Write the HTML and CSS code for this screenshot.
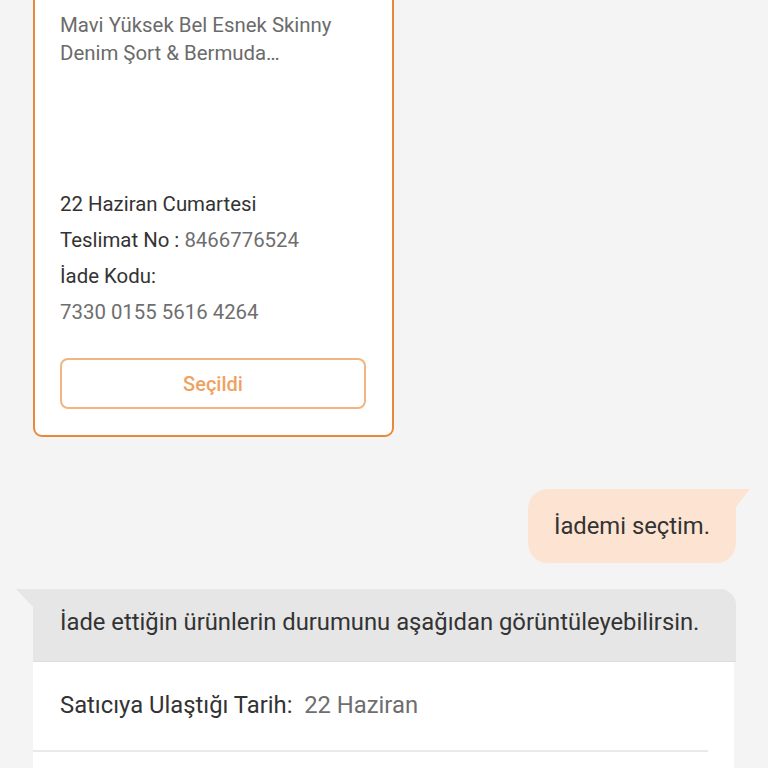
FILE: index.html
```html
<!DOCTYPE html>
<html lang="tr">
<head>
    <meta charset="UTF-8">
    <meta name="viewport" content="width=device-width, initial-scale=1.0">
    <title>İade Asistanı</title>
    <link rel="stylesheet" href="styles.css">
</head>
<body>
    <div class="chat">
        <div class="order-card">
            <div class="product-name">Mavi Yüksek Bel Esnek Skinny Denim Şort &amp; Bermuda…</div>
            <div class="order-info">
                <div class="info-line">22 Haziran Cumartesi</div>
                <div class="info-line">Teslimat No : <span class="muted">8466776524</span></div>
                <div class="info-line">İade Kodu:</div>
                <div class="info-line muted">7330 0155 5616 4264</div>
            </div>
            <button class="select-btn">Seçildi</button>
        </div>

        <div class="msg-row right">
            <div class="bubble user">İademi seçtim.</div>
        </div>

        <div class="bot-box">
            <div class="bot-head">İade ettiğin ürünlerin durumunu aşağıdan görüntüleyebilirsin.</div>
            <div class="bot-body">
                <div class="status-row">Satıcıya Ulaştığı Tarih:&nbsp; <span class="muted">22 Haziran</span></div>
                <div class="status-row"></div>
            </div>
        </div>
    </div>
</body>
</html>
```

FILE: styles.css
```css
body {
    margin: 0;
    background: #f4f4f4;
    font-family: Roboto, "Noto Sans", sans-serif;
    color: #333;
    overflow: hidden;
}

.chat {
    display: flex;
    flex-direction: column;
}

.muted {
    color: #6e6e6e;
}

/* seçili sipariş kartı */
.order-card {
    width: 306px;
    margin: -20px 0 0 33px;
    padding: 29px 26px 26px 25px;
    background: #fff;
    border: 2px solid #e8893a;
    border-radius: 9px;
}

.product-name {
    font-size: 20.4px;
    line-height: 28px;
    color: #6b6b6b;
    width: 285px;
}

.order-info {
    margin-top: 119px;
}

.info-line {
    font-size: 20.4px;
    line-height: 36px;
}

.select-btn {
    display: block;
    width: 100%;
    height: 51px;
    margin-top: 28px;
    background: #fff;
    border: 2px solid #f2b57f;
    border-radius: 8px;
    color: #f0a262;
    font-family: inherit;
    font-size: 20px;
    font-weight: 500;
}

/* mesajlar */
.msg-row {
    display: flex;
    margin-top: 52px;
}

.msg-row.right {
    justify-content: flex-end;
    padding-right: 32px;
}

.bubble {
    position: relative;
    font-size: 23.8px;
    line-height: 28px;
}

.bubble.user {
    background: #fde4d2;
    padding: 23px 26px;
    border-radius: 20px 0 20px 20px;
}

.bubble.user::after {
    content: "";
    position: absolute;
    top: 0;
    right: -14px;
    width: 14px;
    height: 18px;
    background: #fde4d2;
    clip-path: polygon(0 0, 100% 0, 0 100%);
}

.bot-box {
    position: relative;
    margin: 26px 32px 0 33px;
}

.bot-box::before {
    content: "";
    position: absolute;
    top: 0;
    left: -17px;
    width: 17px;
    height: 18px;
    background: #e6e6e6;
    clip-path: polygon(0 0, 100% 0, 100% 100%);
}

.bot-head {
    background: #e6e6e6;
    border-radius: 0 16px 0 0;
    border-bottom: 1px solid #dcdcdc;
    padding: 19px 27px 25px;
    font-size: 23.8px;
    line-height: 28px;
}

.bot-body {
    background: #fff;
    margin-right: 2px;
    padding-right: 26px;
}

.status-row {
    font-size: 23.8px;
    line-height: 28px;
    padding: 29px 0 31px 27px;
    border-bottom: 2px solid #e9e9e9;
}
```
